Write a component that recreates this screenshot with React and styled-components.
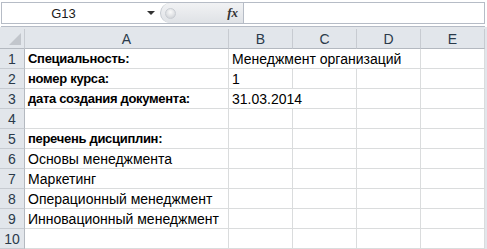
import React from "react";
import styled, { createGlobalStyle } from "styled-components";

const GlobalStyle = createGlobalStyle`
  html, body {
    margin: 0;
    padding: 0;
    background: #ffffff;
  }
  body {
    font-family: "Liberation Sans", Arial, sans-serif;
  }
`;

const Window = styled.div`
  width: 487px;
  height: 249px;
  overflow: hidden;
  background: #ffffff;
  display: flex;
  flex-direction: column;
`;

const FormulaBar = styled.div`
  display: flex;
  height: 20px;
  margin: 2px 2px 0 1px;
  border: 1px solid #b6bcc6;
  background: #ffffff;
`;

const NameBox = styled.div`
  width: 158px;
  display: flex;
  align-items: center;
  font-size: 13px;
  color: #1a1a1a;
`;

const NameText = styled.span`
  flex: 1;
  text-align: center;
  padding-right: 22px;
`;

const DropArrow = styled.span`
  width: 0;
  height: 0;
  border-left: 4px solid transparent;
  border-right: 4px solid transparent;
  border-top: 4px solid #333;
  margin-right: 5px;
`;

const FxPanel = styled.div`
  width: 84px;
  display: flex;
  align-items: center;
  justify-content: flex-end;
  padding-right: 5px;
  box-sizing: border-box;
  background: linear-gradient(#f1f2f4, #dfe2e6);
  border-radius: 10px 0 0 10px;
  border-left: 1px solid #c3c8cf;
  border-right: 1px solid #b6bcc6;
  position: relative;
`;

const Knob = styled.span`
  position: absolute;
  left: 4px;
  top: 5px;
  width: 9px;
  height: 9px;
  border-radius: 50%;
  background: radial-gradient(circle at 50% 35%, #fafafa, #c9cdd2);
  border: 1px solid #c9cdd3;
`;

const Fx = styled.span`
  font-family: "Liberation Serif", "Times New Roman", serif;
  font-style: italic;
  font-weight: bold;
  font-size: 13px;
  color: #333;
`;

const FormulaInput = styled.div`
  flex: 1;
`;

const Spacer = styled.div`
  height: 2px;
  margin: 0 2px 0 1px;
  border-bottom: 1px solid #b6bcc6;
  background: #ffffff;
`;

const Gap = styled.div`
  height: 2px;
  background: #e3e6ea;
`;

const Sheet = styled.div`
  display: grid;
  grid-template-columns: 25px 204px 64px 64px 64px 64px 2px;
  grid-auto-rows: 20px;
  background: #ffffff;
`;

const HeadCell = styled.div`
  background: #e2e6eb;
  border-right: 1px solid #c7cbd1;
  border-bottom: 1px solid #b4b9c0;
  box-sizing: border-box;
  display: flex;
  align-items: center;
  justify-content: center;
  font-size: 14px;
  color: #2a3a4a;
`;

const Corner = styled(HeadCell)`
  position: relative;
  &::after {
    content: "";
    position: absolute;
    right: 3px;
    bottom: 3px;
    width: 0;
    height: 0;
    border-left: 12px solid transparent;
    border-bottom: 12px solid #c2c6cc;
  }
`;

const RowHead = styled(HeadCell)`
  border-bottom: 1px solid #c7cbd1;
  border-right: 1px solid #b4b9c0;
`;

const Edge = styled.div`
  background: #e2e6eb;
`;

const Cell = styled.div`
  grid-column: span ${(p) => p.span || 1};
  border-right: 1px solid #dadcdd;
  border-bottom: 1px solid #dadcdd;
  box-sizing: border-box;
  display: flex;
  align-items: center;
  padding-left: 3px;
  font-size: ${(p) => (p.bold ? "13px" : "14px")};
  letter-spacing: ${(p) => (p.bold ? "-0.3px" : "0")};
  font-weight: ${(p) => (p.bold ? "bold" : "normal")};
  color: #000;
  white-space: nowrap;
`;

const rows = [
  [{ t: "Специальность:", b: true }, { t: "Менеджмент организаций", s: 3 }, null],
  [{ t: "номер курса:", b: true }, { t: "1" }, {}, {}, {}],
  [{ t: "дата создания документа:", b: true }, { t: "31.03.2014", s: 2 }, {}, {}],
  [{}, {}, {}, {}, {}],
  [{ t: "перечень дисциплин:", b: true }, {}, {}, {}, {}],
  [{ t: "Основы менеджмента" }, {}, {}, {}, {}],
  [{ t: "Маркетинг" }, {}, {}, {}, {}],
  [{ t: "Операционный менеджмент" }, {}, {}, {}, {}],
  [{ t: "Инновационный менеджмент" }, {}, {}, {}, {}],
  [{}, {}, {}, {}, {}],
];

export default function App() {
  return (
    <>
      <GlobalStyle />
      <Window>
        <FormulaBar>
          <NameBox>
            <NameText>G13</NameText>
            <DropArrow />
          </NameBox>
          <FxPanel>
            <Knob />
            <Fx>fx</Fx>
          </FxPanel>
          <FormulaInput />
        </FormulaBar>
        <Spacer />
        <Gap />
        <Sheet>
          <Corner />
          {["A", "B", "C", "D", "E"].map((c) => (
            <HeadCell key={c}>{c}</HeadCell>
          ))}
          <Edge />
          {rows.map((r, i) => (
            <React.Fragment key={i}>
              <RowHead>{i + 1}</RowHead>
              {r.filter(Boolean).map((c, j) => (
                <Cell key={j} bold={c.b} span={c.s}>
                  {c.t || ""}
                </Cell>
              ))}
              {r.length === 3 && <Cell />}
              <Edge />
            </React.Fragment>
          ))}
        </Sheet>
      </Window>
    </>
  );
}
